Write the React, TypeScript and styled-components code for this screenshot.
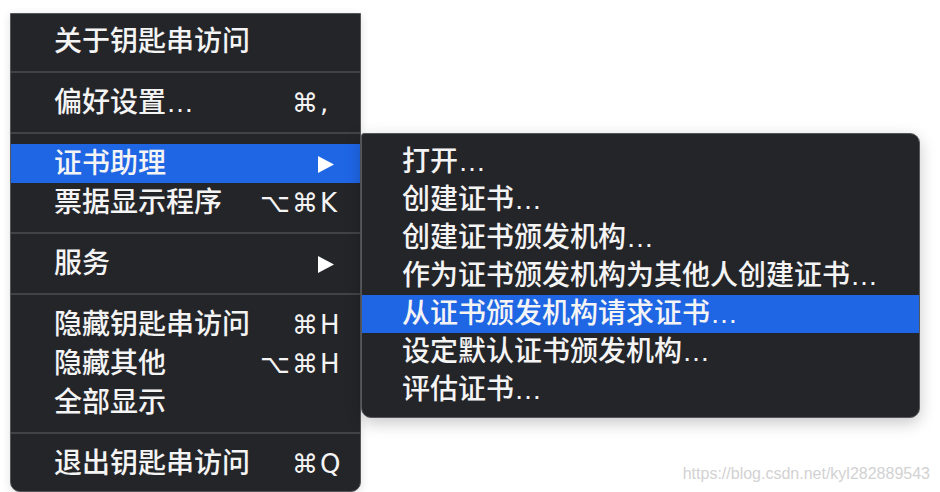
import React from 'react';
import styled, { createGlobalStyle } from 'styled-components';

type Item =
  | { kind: 'sep' }
  | { kind: 'item'; label: string; mods?: string; keyName?: string; sub?: boolean; active?: boolean };

const mainItems: Item[] = [
  { kind: 'item', label: '关于钥匙串访问' },
  { kind: 'sep' },
  { kind: 'item', label: '偏好设置…', mods: '⌘', keyName: ',' },
  { kind: 'sep' },
  { kind: 'item', label: '证书助理', sub: true, active: true },
  { kind: 'item', label: '票据显示程序', mods: '⌥⌘', keyName: 'K' },
  { kind: 'sep' },
  { kind: 'item', label: '服务', sub: true },
  { kind: 'sep' },
  { kind: 'item', label: '隐藏钥匙串访问', mods: '⌘', keyName: 'H' },
  { kind: 'item', label: '隐藏其他', mods: '⌥⌘', keyName: 'H' },
  { kind: 'item', label: '全部显示' },
  { kind: 'sep' },
  { kind: 'item', label: '退出钥匙串访问', mods: '⌘', keyName: 'Q' },
];

const subItems = [
  { label: '打开…' },
  { label: '创建证书…' },
  { label: '创建证书颁发机构…' },
  { label: '作为证书颁发机构为其他人创建证书…' },
  { label: '从证书颁发机构请求证书…', active: true },
  { label: '设定默认证书颁发机构…' },
  { label: '评估证书…' },
];

const Arrow = () => (
  <svg width="17" height="17" viewBox="0 0 17 17">
    <polygon points="1,0 17,8.5 1,17" fill="#ffffff" />
  </svg>
);

const App = () => {
  return (
    <Page>
      <GlobalStyle />
      <MainMenu>
        {mainItems.map((it, i) =>
          it.kind === 'sep' ? (
            <Separator key={i} />
          ) : (
            <MainRow key={i} $active={it.active}>
              <Label>{it.label}</Label>
              {it.sub && (
                <ArrowBox>
                  <Arrow />
                </ArrowBox>
              )}
              {it.mods && (
                <Shortcut>
                  <Mods>{it.mods}</Mods>
                  <KeyName>{it.keyName}</KeyName>
                </Shortcut>
              )}
            </MainRow>
          )
        )}
      </MainMenu>
      <SubMenu>
        {subItems.map((it, i) => (
          <SubRow key={i} $active={it.active}>
            <Label>{it.label}</Label>
          </SubRow>
        ))}
      </SubMenu>
      <Watermark>https://blog.csdn.net/kyl282889543</Watermark>
    </Page>
  );
};

export default App;

const GlobalStyle = createGlobalStyle`
  html, body {
    margin: 0;
    padding: 0;
    background: #ffffff;
  }
  body {
    font-family: "Liberation Sans", "Noto Sans CJK SC", sans-serif;
  }
`;

const Page = styled.div`
  position: relative;
  width: 940px;
  height: 492px;
  overflow: hidden;
  display: flex;
  align-items: flex-start;
  padding: 13px 0 0 10px;
  box-sizing: border-box;
  background: #ffffff;
`;

const MainMenu = styled.div`
  width: 351px;
  box-sizing: border-box;
  padding: 8px 0;
  background: #242529;
  border: 1px solid #56575b;
  border-radius: 0 0 10px 10px;
  box-shadow: 0 2px 10px rgba(0, 0, 0, 0.12);
  display: flex;
  flex-direction: column;
`;

const SubMenu = styled.div`
  width: 559px;
  margin-top: 120px;
  box-sizing: border-box;
  padding: 9px 0 8px;
  background: #242529;
  border: 1px solid #56575b;
  border-radius: 3px 10px 10px 10px;
  box-shadow: 0 5px 16px rgba(0, 0, 0, 0.22);
  display: flex;
  flex-direction: column;
  z-index: 1;
`;

const MainRow = styled.div<{ $active?: boolean }>`
  height: 39px;
  display: flex;
  align-items: center;
  padding: 0 16px 0 43px;
  background: ${(p) => (p.$active ? '#1f66e5' : 'transparent')};
  color: #f4f4f4;
  font-size: 28px;
  font-weight: 500;
`;

const SubRow = styled.div<{ $active?: boolean }>`
  height: 38px;
  display: flex;
  align-items: center;
  padding: 0 16px 0 40px;
  background: ${(p) => (p.$active ? '#1f66e5' : 'transparent')};
  color: #f4f4f4;
  font-size: 28px;
  font-weight: 500;
`;

const Label = styled.span`
  flex: 1;
  white-space: nowrap;
  line-height: 1;
`;

const Separator = styled.div`
  height: 22px;
  display: flex;
  align-items: center;
  &::after {
    content: '';
    flex: 1;
    height: 2px;
    background: #424347;
  }
`;

const ArrowBox = styled.span`
  display: flex;
  align-items: center;
  margin-right: 10px;
  margin-top: 2px;
`;

const Shortcut = styled.span`
  display: flex;
  align-items: center;
  font-family: "DejaVu Sans", sans-serif;
  font-size: 26px;
  font-weight: 500;
  color: #f4f4f4;
  line-height: 1;
`;

const Mods = styled.span`
  text-align: right;
  letter-spacing: 2px;
`;

const KeyName = styled.span`
  width: 24px;
  text-align: left;
`;

const Watermark = styled.div`
  position: absolute;
  right: 10px;
  bottom: 9px;
  font-family: "Liberation Sans", sans-serif;
  font-size: 16px;
  color: #d2d2d2;
`;
